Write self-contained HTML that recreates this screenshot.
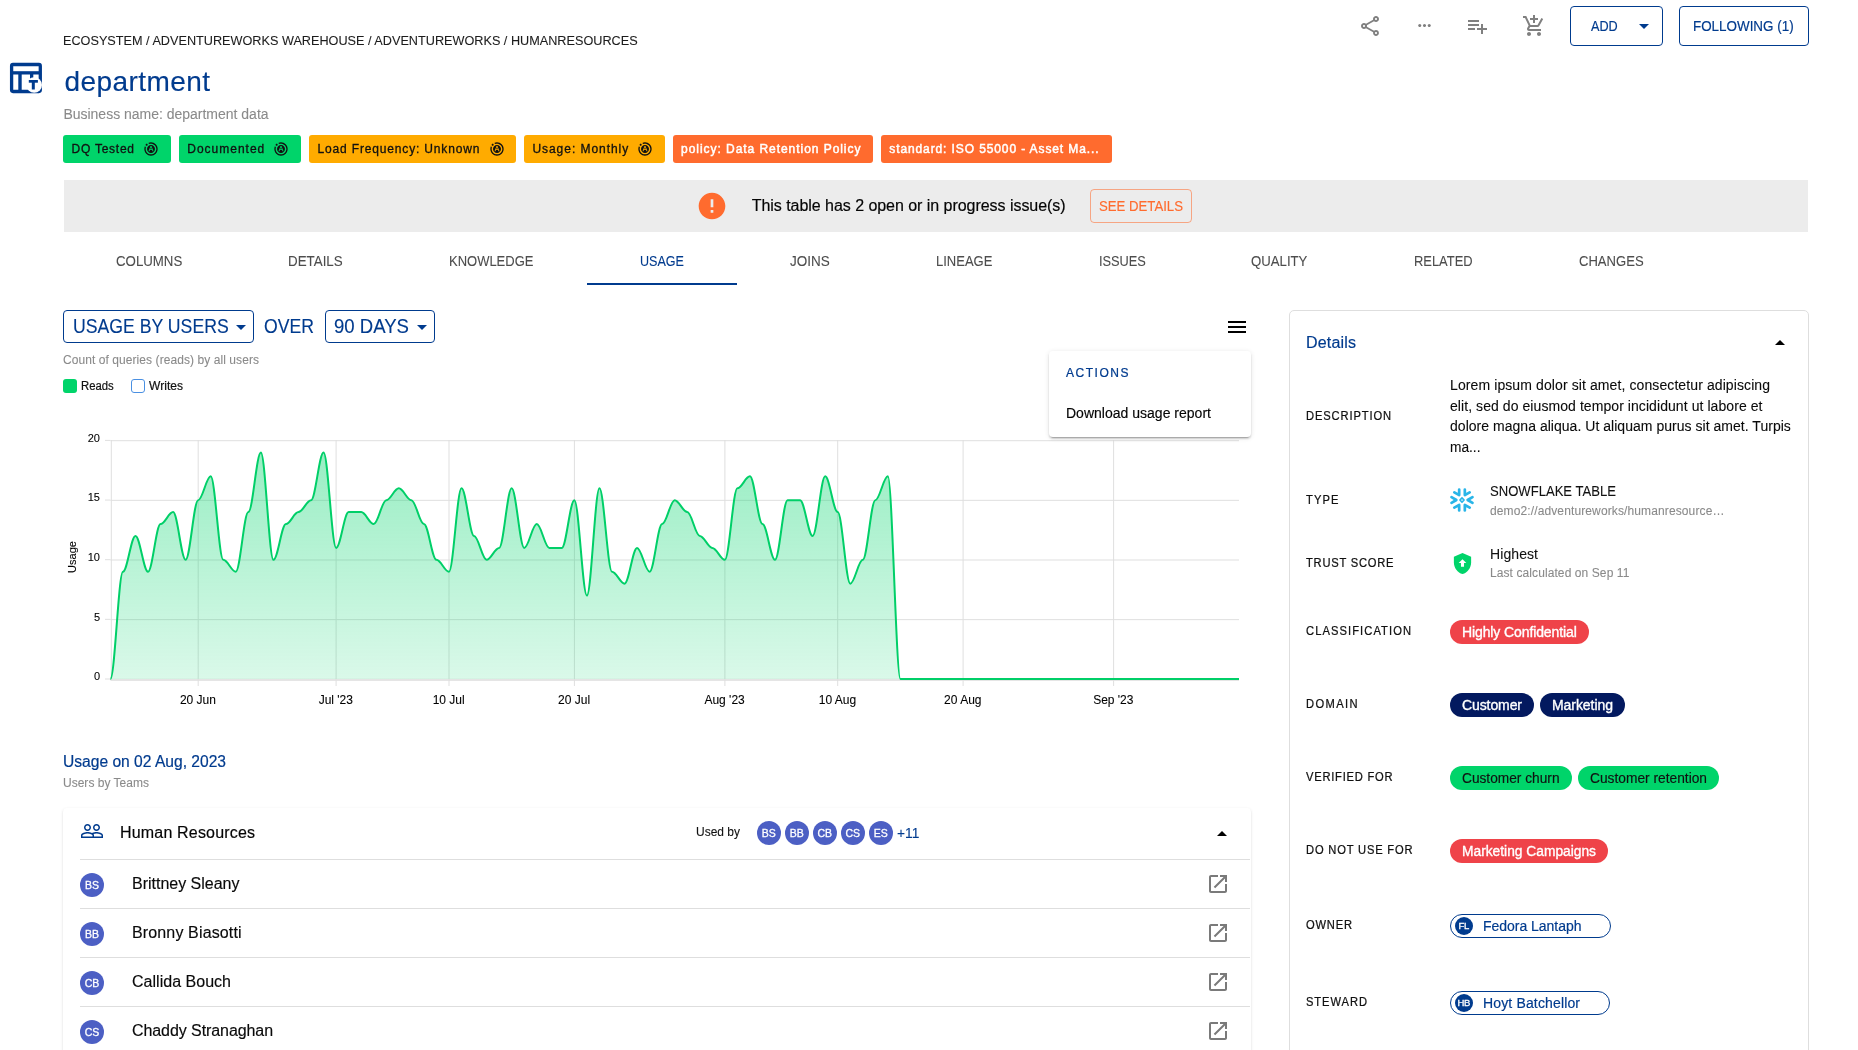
<!DOCTYPE html><html><head><meta charset="utf-8"><title>department - Usage</title><style>html,body{margin:0;padding:0;background:#fff}
body{width:1858px;height:1050px;overflow:hidden;position:relative;font-family:"Liberation Sans", sans-serif;}
.t{position:absolute;white-space:nowrap;font-family:"Liberation Sans", sans-serif;transform-origin:0 50%}
#app{position:absolute;left:0;top:0;width:1858px;height:1050px;will-change:transform}
.b{position:absolute}
.i{position:absolute;display:block;overflow:visible}
.av{border-radius:50%;color:#fff;text-align:center;font-family:"Liberation Sans", sans-serif;-webkit-text-stroke:.3px;letter-spacing:0}
</style></head><body><div id="app"><div class="t" style="left:63.4px;top:32.0px;font-size:13px;line-height:17px;color:#1c1c1c;-webkit-text-stroke:0.09px;transform:scaleX(0.9745);">ECOSYSTEM / ADVENTUREWORKS WAREHOUSE / ADVENTUREWORKS / HUMANRESOURCES</div><svg class="i" style="left:8px;top:61px" width="36" height="34" viewBox="8 61 36 34">
<rect x="11.6" y="64.5" width="28.7" height="27" rx="1.4" fill="none" stroke="#003b8e" stroke-width="3.3"/>
<rect x="11" y="71.2" width="30" height="3.3" fill="#003b8e"/>
<rect x="18.3" y="73" width="3.4" height="18" fill="#003b8e"/>
<rect x="30" y="73" width="3.3" height="6" fill="#003b8e"/>
<circle cx="34.2" cy="85" r="7.8" fill="#fff"/>
<rect x="28.8" y="80" width="9.1" height="2.7" fill="#003b8e"/>
<rect x="31.8" y="80" width="3" height="9.5" fill="#003b8e"/>
</svg><div class="t" style="left:64.5px;top:63.5px;font-size:28px;line-height:36px;color:#003b8e;-webkit-text-stroke:0.15px;letter-spacing:0.43px;">department</div><div class="t" style="left:63.4px;top:104.8px;font-size:14px;line-height:18px;color:#8a8a8a;-webkit-text-stroke:0.09px;letter-spacing:-0.01px;">Business name: department data</div><svg class="i" style="left:1358px;top:14px" width="24" height="24" viewBox="0 0 24 24"><path fill="#808080" fill-rule="evenodd" d="M18 16.08c-.76 0-1.44.3-1.96.77L8.91 12.7c.05-.23.09-.46.09-.7s-.04-.47-.09-.7l7.05-4.11c.54.5 1.25.81 2.04.81 1.66 0 3-1.34 3-3s-1.34-3-3-3-3 1.34-3 3c0 .24.04.47.09.7L8.04 9.81C7.5 9.31 6.79 9 6 9c-1.66 0-3 1.34-3 3s1.34 3 3 3c.79 0 1.5-.31 2.04-.81l7.12 4.16c-.05.21-.08.43-.08.65 0 1.61 1.31 2.92 2.92 2.92s2.92-1.31 2.92-2.92c0-1.61-1.31-2.92-2.92-2.92zM18 4c.55 0 1 .45 1 1s-.45 1-1 1-1-.45-1-1 .45-1 1-1zM6 13c-.55 0-1-.45-1-1s.45-1 1-1 1 .45 1 1-.45 1-1 1zm12 7.02c-.55 0-1-.45-1-1s.45-1 1-1 1 .45 1 1-.45 1-1 1z"/></svg><svg class="i" style="left:1414.5px;top:15.5px" width="19" height="19" viewBox="0 0 24 24"><path fill="#808080" fill-rule="evenodd" d="M6 10c-1.1 0-2 .9-2 2s.9 2 2 2 2-.9 2-2-.9-2-2-2zm12 0c-1.1 0-2 .9-2 2s.9 2 2 2 2-.9 2-2-.9-2-2-2zm-6 0c-1.1 0-2 .9-2 2s.9 2 2 2 2-.9 2-2-.9-2-2-2z"/></svg><svg class="i" style="left:1464.9px;top:14px" width="24" height="24" viewBox="0 0 24 24"><path fill="#808080" fill-rule="evenodd" d="M14 10H3v2h11v-2zm0-4H3v2h11V6zm4 8v-4h-2v4h-4v2h4v4h2v-4h4v-2h-4zM3 16h7v-2H3v2z"/></svg><svg class="i" style="left:1522px;top:14px" width="24" height="24" viewBox="0 0 24 24"><path fill="#808080" fill-rule="evenodd" d="M11 9h2V6h3V4h-3V1h-2v3H8v2h3v3zm-4 9c-1.1 0-1.99.9-1.99 2S5.9 22 7 22s2-.9 2-2-.9-2-2-2zm10 0c-1.1 0-1.99.9-1.99 2s.89 2 1.99 2 2-.9 2-2-.9-2-2-2zm-9.83-3.25l.03-.12.9-1.63h7.45c.75 0 1.41-.41 1.75-1.03l3.86-7.01L19.42 4h-.01l-1.1 2-2.76 5H8.53l-.13-.27L6.16 6l-.95-2-.94-2H1v2h2l3.6 7.59-1.35 2.45c-.16.28-.25.61-.25.96 0 1.1.9 2 2 2h12v-2H7.42c-.13 0-.25-.11-.25-.25z"/></svg><div class="b" style="left:1570px;top:6px;width:93px;height:40px;border:1px solid #003b8e;border-radius:4px;box-sizing:border-box"></div><div class="t" style="left:1590.7px;top:17.1px;font-size:14px;line-height:18px;color:#003b8e;-webkit-text-stroke:0.18px;transform:scaleX(0.9032);">ADD</div><svg class="i" style="left:1631.5px;top:13.5px" width="24" height="24" viewBox="0 0 24 24"><path fill="#003b8e" fill-rule="evenodd" d="M7 10l5 5 5-5z"/></svg><div class="b" style="left:1679px;top:6px;width:130px;height:40px;border:1px solid #003b8e;border-radius:4px;box-sizing:border-box"></div><div class="t" style="left:1693.4px;top:17.1px;font-size:14px;line-height:18px;color:#003b8e;-webkit-text-stroke:0.18px;transform:scaleX(0.9580);">FOLLOWING (1)</div><div class="b" style="left:63px;top:135px;width:108px;height:28px;background:#00d46a;border-radius:3px"></div><div class="t" style="left:71.6px;top:140.8px;font-size:12px;line-height:16px;color:#111;-webkit-text-stroke:0.30px;letter-spacing:0.74px;">DQ Tested</div><svg class="i" style="left:143.2px;top:141px" width="16" height="16" viewBox="0 0 24 24"><path fill="#111" fill-rule="evenodd" d="M2.88 7.88l1.54 1.54C4.15 10.23 4 11.1 4 12c0 4.41 3.59 8 8 8s8-3.59 8-8-3.59-8-8-8c-.9 0-1.77.15-2.58.42L7.89 2.89C9.15 2.32 10.54 2 12 2c5.52 0 10 4.48 10 10s-4.48 10-10 10S2 17.52 2 12c0-1.47.32-2.86.88-4.12zM7 5.5C7 6.33 6.33 7 5.5 7S4 6.33 4 5.5 4.67 4 5.5 4 7 4.67 7 5.500zM12.030 8.990h-.07L10.800 12.300h2.390l-1.160-3.310zM12 18c3.310 0 6-2.690 6-6s-2.690-6-6-6-6 2.690-6 6 2.690 6 6 6zm-.71-10.500h1.430l3.010 8h-1.390l-.72-2.040h-3.230l-.73 2.040H8.280l3.010-8z"/></svg><div class="b" style="left:179px;top:135px;width:122px;height:28px;background:#00d46a;border-radius:3px"></div><div class="t" style="left:187.3px;top:140.8px;font-size:12px;line-height:16px;color:#111;-webkit-text-stroke:0.30px;letter-spacing:0.99px;">Documented</div><svg class="i" style="left:273.3px;top:141px" width="16" height="16" viewBox="0 0 24 24"><path fill="#111" fill-rule="evenodd" d="M2.88 7.88l1.54 1.54C4.15 10.23 4 11.1 4 12c0 4.41 3.59 8 8 8s8-3.59 8-8-3.59-8-8-8c-.9 0-1.77.15-2.58.42L7.89 2.89C9.15 2.32 10.54 2 12 2c5.52 0 10 4.48 10 10s-4.48 10-10 10S2 17.52 2 12c0-1.47.32-2.86.88-4.12zM7 5.5C7 6.33 6.33 7 5.5 7S4 6.33 4 5.5 4.67 4 5.5 4 7 4.67 7 5.500zM12.030 8.990h-.07L10.800 12.300h2.390l-1.160-3.310zM12 18c3.310 0 6-2.690 6-6s-2.690-6-6-6-6 2.690-6 6 2.690 6 6 6zm-.71-10.500h1.430l3.010 8h-1.390l-.72-2.040h-3.230l-.73 2.040H8.280l3.010-8z"/></svg><div class="b" style="left:309px;top:135px;width:207px;height:28px;background:#ffab00;border-radius:3px"></div><div class="t" style="left:317.5px;top:140.8px;font-size:12px;line-height:16px;color:#111;-webkit-text-stroke:0.30px;letter-spacing:0.84px;">Load Frequency: Unknown</div><svg class="i" style="left:488.8px;top:141px" width="16" height="16" viewBox="0 0 24 24"><path fill="#111" fill-rule="evenodd" d="M2.88 7.88l1.54 1.54C4.15 10.23 4 11.1 4 12c0 4.41 3.59 8 8 8s8-3.59 8-8-3.59-8-8-8c-.9 0-1.77.15-2.58.42L7.89 2.89C9.15 2.32 10.54 2 12 2c5.52 0 10 4.48 10 10s-4.48 10-10 10S2 17.52 2 12c0-1.47.32-2.86.88-4.12zM7 5.5C7 6.33 6.33 7 5.5 7S4 6.33 4 5.5 4.67 4 5.5 4 7 4.67 7 5.500zM12.030 8.990h-.07L10.800 12.300h2.390l-1.160-3.310zM12 18c3.310 0 6-2.690 6-6s-2.690-6-6-6-6 2.690-6 6 2.690 6 6 6zm-.71-10.500h1.430l3.010 8h-1.390l-.72-2.040h-3.230l-.73 2.040H8.280l3.010-8z"/></svg><div class="b" style="left:524px;top:135px;width:141px;height:28px;background:#ffab00;border-radius:3px"></div><div class="t" style="left:532.4px;top:140.8px;font-size:12px;line-height:16px;color:#111;-webkit-text-stroke:0.30px;letter-spacing:0.96px;">Usage: Monthly</div><svg class="i" style="left:637.3px;top:141px" width="16" height="16" viewBox="0 0 24 24"><path fill="#111" fill-rule="evenodd" d="M2.88 7.88l1.54 1.54C4.15 10.23 4 11.1 4 12c0 4.41 3.59 8 8 8s8-3.59 8-8-3.59-8-8-8c-.9 0-1.77.15-2.58.42L7.89 2.89C9.15 2.32 10.54 2 12 2c5.52 0 10 4.48 10 10s-4.48 10-10 10S2 17.52 2 12c0-1.47.32-2.86.88-4.12zM7 5.5C7 6.33 6.33 7 5.5 7S4 6.33 4 5.5 4.67 4 5.5 4 7 4.67 7 5.500zM12.030 8.990h-.07L10.800 12.300h2.390l-1.160-3.310zM12 18c3.310 0 6-2.690 6-6s-2.690-6-6-6-6 2.690-6 6 2.690 6 6 6zm-.71-10.500h1.430l3.010 8h-1.390l-.72-2.040h-3.230l-.73 2.040H8.280l3.010-8z"/></svg><div class="b" style="left:673px;top:135px;width:200px;height:28px;background:#ff6b2e;border-radius:3px"></div><div class="t" style="left:681.1px;top:140.8px;font-size:12px;line-height:16px;color:#fff;-webkit-text-stroke:0.48px;letter-spacing:0.95px;">policy: Data Retention Policy</div><div class="b" style="left:881px;top:135px;width:231px;height:28px;background:#ff6b2e;border-radius:3px"></div><div class="t" style="left:889.3px;top:140.8px;font-size:12px;line-height:16px;color:#fff;-webkit-text-stroke:0.48px;letter-spacing:0.89px;">standard: ISO 55000 - Asset Ma...</div><div class="b" style="left:64px;top:180px;width:1744px;height:52px;background:#ececec"></div><svg class="i" style="left:696px;top:190px" width="32" height="32" viewBox="0 0 24 24"><path fill="#ff6b2e" fill-rule="evenodd" d="M12 2C6.48 2 2 6.48 2 12s4.48 10 10 10 10-4.48 10-10S17.52 2 12 2zm1 15h-2v-2h2v2zm0-4h-2V7h2v6z"/></svg><div class="t" style="left:751.7px;top:195.0px;font-size:16px;line-height:21px;color:#050505;-webkit-text-stroke:0.18px;letter-spacing:-0.04px;">This table has 2 open or in progress issue(s)</div><div class="b" style="left:1090px;top:189px;width:102px;height:34px;border:1px solid rgba(255,107,46,.55);border-radius:4px;box-sizing:border-box"></div><div class="t" style="left:1098.7px;top:197.1px;font-size:14px;line-height:18px;color:#ff6b2e;-webkit-text-stroke:0.15px;transform:scaleX(0.9415);">SEE DETAILS</div><div class="t" style="left:116.0px;top:252.0px;font-size:14px;line-height:18px;color:#4d4d4d;-webkit-text-stroke:0.09px;transform:scaleX(0.9469);">COLUMNS</div><div class="t" style="left:288.2px;top:252.0px;font-size:14px;line-height:18px;color:#4d4d4d;-webkit-text-stroke:0.09px;transform:scaleX(0.9544);">DETAILS</div><div class="t" style="left:449.2px;top:252.0px;font-size:14px;line-height:18px;color:#4d4d4d;-webkit-text-stroke:0.09px;transform:scaleX(0.9273);">KNOWLEDGE</div><div class="t" style="left:639.5px;top:252.0px;font-size:14px;line-height:18px;color:#003b8e;-webkit-text-stroke:0.09px;transform:scaleX(0.8977);">USAGE</div><div class="t" style="left:790.2px;top:252.0px;font-size:14px;line-height:18px;color:#4d4d4d;-webkit-text-stroke:0.09px;transform:scaleX(0.9628);">JOINS</div><div class="t" style="left:936.2px;top:252.0px;font-size:14px;line-height:18px;color:#4d4d4d;-webkit-text-stroke:0.09px;transform:scaleX(0.9291);">LINEAGE</div><div class="t" style="left:1098.5px;top:252.0px;font-size:14px;line-height:18px;color:#4d4d4d;-webkit-text-stroke:0.09px;transform:scaleX(0.9132);">ISSUES</div><div class="t" style="left:1251.3px;top:252.0px;font-size:14px;line-height:18px;color:#4d4d4d;-webkit-text-stroke:0.09px;transform:scaleX(0.9415);">QUALITY</div><div class="t" style="left:1414.1px;top:252.0px;font-size:14px;line-height:18px;color:#4d4d4d;-webkit-text-stroke:0.09px;transform:scaleX(0.9222);">RELATED</div><div class="t" style="left:1579.0px;top:252.0px;font-size:14px;line-height:18px;color:#4d4d4d;-webkit-text-stroke:0.09px;transform:scaleX(0.9331);">CHANGES</div><div class="b" style="left:587px;top:282.5px;width:150px;height:2.0px;background:#003b8e"></div><div class="b" style="left:63px;top:310px;width:191px;height:33px;border:1px solid #003b8e;border-radius:4px;box-sizing:border-box"></div><div class="t" style="left:72.5px;top:312.6px;font-size:20px;line-height:26px;color:#003b8e;-webkit-text-stroke:0.12px;transform:scaleX(0.8829);">USAGE BY USERS</div><svg class="i" style="left:228.5px;top:315px" width="24" height="24" viewBox="0 0 24 24"><path fill="#003b8e" fill-rule="evenodd" d="M7 10l5 5 5-5z"/></svg><div class="t" style="left:264.0px;top:312.6px;font-size:20px;line-height:26px;color:#003b8e;-webkit-text-stroke:0.12px;transform:scaleX(0.8820);">OVER</div><div class="b" style="left:325px;top:310px;width:110px;height:33px;border:1px solid #003b8e;border-radius:4px;box-sizing:border-box"></div><div class="t" style="left:334.0px;top:312.6px;font-size:20px;line-height:26px;color:#003b8e;-webkit-text-stroke:0.12px;transform:scaleX(0.9284);">90 DAYS</div><svg class="i" style="left:409.7px;top:315px" width="24" height="24" viewBox="0 0 24 24"><path fill="#003b8e" fill-rule="evenodd" d="M7 10l5 5 5-5z"/></svg><div class="t" style="left:63.0px;top:351.8px;font-size:12px;line-height:16px;color:#8a8a8a;-webkit-text-stroke:0.09px;letter-spacing:0.07px;">Count of queries (reads) by all users</div><div class="b" style="left:63px;top:379px;width:14px;height:14px;background:#00d46a;border-radius:3px"></div><div class="t" style="left:81.3px;top:378.0px;font-size:12px;line-height:16px;color:#111;-webkit-text-stroke:0.21px;transform:scaleX(0.9427);">Reads</div><div class="b" style="left:131px;top:379px;width:14px;height:14px;background:#fff;border:1px solid #4a90e2;border-radius:3px;box-sizing:border-box"></div><div class="t" style="left:149.0px;top:378.0px;font-size:12px;line-height:16px;color:#111;-webkit-text-stroke:0.21px;letter-spacing:0.04px;">Writes</div><svg class="i" style="left:1225px;top:315px" width="24" height="24" viewBox="0 0 24 24"><path fill="#000" fill-rule="evenodd" d="M3 18h18v-2H3v2zm0-5h18v-2H3v2zm0-7v2h18V6H3z"/></svg><svg class="i" style="left:0;top:420px" width="1260" height="300" viewBox="0 420 1260 300"><defs><linearGradient id="g" x1="0" y1="452" x2="0" y2="679" gradientUnits="userSpaceOnUse"><stop offset="0" stop-color="#00d46a" stop-opacity=".40"/><stop offset="1" stop-color="#00d46a" stop-opacity=".145"/></linearGradient></defs><line x1="110.5" x2="1239" y1="440.70" y2="440.70" stroke="#dfdfdf" stroke-width="1"/><line x1="105" x2="110.5" y1="440.40" y2="440.40" stroke="#dfdfdf" stroke-width="1"/><line x1="110.5" x2="1239" y1="500.35" y2="500.35" stroke="#dfdfdf" stroke-width="1"/><line x1="105" x2="110.5" y1="500.05" y2="500.05" stroke="#dfdfdf" stroke-width="1"/><line x1="110.5" x2="1239" y1="560.00" y2="560.00" stroke="#dfdfdf" stroke-width="1"/><line x1="105" x2="110.5" y1="559.70" y2="559.70" stroke="#dfdfdf" stroke-width="1"/><line x1="110.5" x2="1239" y1="619.65" y2="619.65" stroke="#dfdfdf" stroke-width="1"/><line x1="105" x2="110.5" y1="619.35" y2="619.35" stroke="#dfdfdf" stroke-width="1"/><line x1="110.5" x2="1239" y1="679.30" y2="679.30" stroke="#dfdfdf" stroke-width="1"/><line x1="105" x2="110.5" y1="679.00" y2="679.00" stroke="#dfdfdf" stroke-width="1"/><line x1="198.2" x2="198.2" y1="440" y2="686" stroke="#dfdfdf" stroke-width="1"/><line x1="336.1" x2="336.1" y1="440" y2="686" stroke="#dfdfdf" stroke-width="1"/><line x1="449.0" x2="449.0" y1="440" y2="686" stroke="#dfdfdf" stroke-width="1"/><line x1="574.4" x2="574.4" y1="440" y2="686" stroke="#dfdfdf" stroke-width="1"/><line x1="724.9" x2="724.9" y1="440" y2="686" stroke="#dfdfdf" stroke-width="1"/><line x1="837.7" x2="837.7" y1="440" y2="686" stroke="#dfdfdf" stroke-width="1"/><line x1="963.1" x2="963.1" y1="440" y2="686" stroke="#dfdfdf" stroke-width="1"/><line x1="1113.6" x2="1113.6" y1="440" y2="686" stroke="#dfdfdf" stroke-width="1"/><line x1="111.3" x2="111.3" y1="440" y2="680" stroke="#dfdfdf" stroke-width="1"/><line x1="110.5" x2="1239" y1="680.3" y2="680.3" stroke="#dfdfdf" stroke-width="1"/><path d="M 110.40 679.00 C 114.79 679.00 118.55 571.72 122.94 571.72 C 127.33 571.72 131.09 535.96 135.48 535.96 C 139.87 535.96 143.63 571.72 148.02 571.72 C 152.41 571.72 156.17 524.04 160.56 524.04 C 164.95 524.04 168.71 512.12 173.10 512.12 C 177.49 512.12 181.25 559.80 185.64 559.80 C 190.03 559.80 193.79 500.20 198.18 500.20 C 202.57 500.20 206.33 476.36 210.72 476.36 C 215.11 476.36 218.87 559.80 223.26 559.80 C 227.65 559.80 231.41 571.72 235.80 571.72 C 240.19 571.72 243.95 512.12 248.34 512.12 C 252.73 512.12 256.49 452.52 260.88 452.52 C 265.27 452.52 269.03 559.80 273.42 559.80 C 277.81 559.80 281.57 524.04 285.96 524.04 C 290.35 524.04 294.11 512.12 298.50 512.12 C 302.89 512.12 306.65 500.20 311.04 500.20 C 315.43 500.20 319.19 452.52 323.58 452.52 C 327.97 452.52 331.73 547.88 336.12 547.88 C 340.51 547.88 344.27 512.12 348.66 512.12 C 353.05 512.12 356.81 512.12 361.20 512.12 C 365.59 512.12 369.35 524.04 373.74 524.04 C 378.13 524.04 381.89 500.20 386.28 500.20 C 390.67 500.20 394.43 488.28 398.82 488.28 C 403.21 488.28 406.97 500.20 411.36 500.20 C 415.75 500.20 419.51 524.04 423.90 524.04 C 428.29 524.04 432.05 559.80 436.44 559.80 C 440.83 559.80 444.59 571.72 448.98 571.72 C 453.37 571.72 457.13 488.28 461.52 488.28 C 465.91 488.28 469.67 535.96 474.06 535.96 C 478.45 535.96 482.21 559.80 486.60 559.80 C 490.99 559.80 494.75 547.88 499.14 547.88 C 503.53 547.88 507.29 488.28 511.68 488.28 C 516.07 488.28 519.83 547.88 524.22 547.88 C 528.61 547.88 532.37 524.04 536.76 524.04 C 541.15 524.04 544.91 547.88 549.30 547.88 C 553.69 547.88 557.45 547.88 561.84 547.88 C 566.23 547.88 569.99 500.20 574.38 500.20 C 578.77 500.20 582.53 595.56 586.92 595.56 C 591.31 595.56 595.07 488.28 599.46 488.28 C 603.85 488.28 607.61 571.72 612.00 571.72 C 616.39 571.72 620.15 583.64 624.54 583.64 C 628.93 583.64 632.69 547.88 637.08 547.88 C 641.47 547.88 645.23 571.72 649.62 571.72 C 654.01 571.72 657.77 524.04 662.16 524.04 C 666.55 524.04 670.31 500.20 674.70 500.20 C 679.09 500.20 682.85 512.12 687.24 512.12 C 691.63 512.12 695.39 535.96 699.78 535.96 C 704.17 535.96 707.93 547.88 712.32 547.88 C 716.71 547.88 720.47 559.80 724.86 559.80 C 729.25 559.80 733.01 488.28 737.40 488.28 C 741.79 488.28 745.55 476.36 749.94 476.36 C 754.33 476.36 758.09 524.04 762.48 524.04 C 766.87 524.04 770.63 559.80 775.02 559.80 C 779.41 559.80 783.17 500.20 787.56 500.20 C 791.95 500.20 795.71 500.20 800.10 500.20 C 804.49 500.20 808.25 535.96 812.64 535.96 C 817.03 535.96 820.79 476.36 825.18 476.36 C 829.57 476.36 833.33 512.12 837.72 512.12 C 842.11 512.12 845.87 583.64 850.26 583.64 C 854.65 583.64 858.41 559.80 862.80 559.80 C 867.19 559.80 870.95 500.20 875.34 500.20 C 879.73 500.20 883.49 476.36 887.88 476.36 C 892.27 476.36 896.03 679.00 900.42 679.00 C 904.81 679.00 908.57 679.00 912.96 679.00 C 917.35 679.00 921.11 679.00 925.50 679.00 C 929.89 679.00 933.65 679.00 938.04 679.00 C 942.43 679.00 946.19 679.00 950.58 679.00 C 954.97 679.00 958.73 679.00 963.12 679.00 C 967.51 679.00 971.27 679.00 975.66 679.00 C 980.05 679.00 983.81 679.00 988.20 679.00 C 992.59 679.00 996.35 679.00 1000.74 679.00 C 1005.13 679.00 1008.89 679.00 1013.28 679.00 C 1017.67 679.00 1021.43 679.00 1025.82 679.00 C 1030.21 679.00 1033.97 679.00 1038.36 679.00 C 1042.75 679.00 1046.51 679.00 1050.90 679.00 C 1055.29 679.00 1059.05 679.00 1063.44 679.00 C 1067.83 679.00 1071.59 679.00 1075.98 679.00 C 1080.37 679.00 1084.13 679.00 1088.52 679.00 C 1092.91 679.00 1096.67 679.00 1101.06 679.00 C 1105.45 679.00 1109.21 679.00 1113.60 679.00 C 1117.99 679.00 1121.75 679.00 1126.14 679.00 C 1130.53 679.00 1134.29 679.00 1138.68 679.00 C 1143.07 679.00 1146.83 679.00 1151.22 679.00 C 1155.61 679.00 1159.37 679.00 1163.76 679.00 C 1168.15 679.00 1171.91 679.00 1176.30 679.00 C 1180.69 679.00 1184.45 679.00 1188.84 679.00 C 1193.23 679.00 1196.99 679.00 1201.38 679.00 C 1205.77 679.00 1209.53 679.00 1213.92 679.00 C 1218.31 679.00 1222.07 679.00 1226.46 679.00 C 1230.85 679.00 1234.61 679.00 1239.00 679.00 L 1239.00 679.00 L 110.40 679.00 Z" fill="url(#g)"/><path d="M 110.40 679.00 C 114.79 679.00 118.55 571.72 122.94 571.72 C 127.33 571.72 131.09 535.96 135.48 535.96 C 139.87 535.96 143.63 571.72 148.02 571.72 C 152.41 571.72 156.17 524.04 160.56 524.04 C 164.95 524.04 168.71 512.12 173.10 512.12 C 177.49 512.12 181.25 559.80 185.64 559.80 C 190.03 559.80 193.79 500.20 198.18 500.20 C 202.57 500.20 206.33 476.36 210.72 476.36 C 215.11 476.36 218.87 559.80 223.26 559.80 C 227.65 559.80 231.41 571.72 235.80 571.72 C 240.19 571.72 243.95 512.12 248.34 512.12 C 252.73 512.12 256.49 452.52 260.88 452.52 C 265.27 452.52 269.03 559.80 273.42 559.80 C 277.81 559.80 281.57 524.04 285.96 524.04 C 290.35 524.04 294.11 512.12 298.50 512.12 C 302.89 512.12 306.65 500.20 311.04 500.20 C 315.43 500.20 319.19 452.52 323.58 452.52 C 327.97 452.52 331.73 547.88 336.12 547.88 C 340.51 547.88 344.27 512.12 348.66 512.12 C 353.05 512.12 356.81 512.12 361.20 512.12 C 365.59 512.12 369.35 524.04 373.74 524.04 C 378.13 524.04 381.89 500.20 386.28 500.20 C 390.67 500.20 394.43 488.28 398.82 488.28 C 403.21 488.28 406.97 500.20 411.36 500.20 C 415.75 500.20 419.51 524.04 423.90 524.04 C 428.29 524.04 432.05 559.80 436.44 559.80 C 440.83 559.80 444.59 571.72 448.98 571.72 C 453.37 571.72 457.13 488.28 461.52 488.28 C 465.91 488.28 469.67 535.96 474.06 535.96 C 478.45 535.96 482.21 559.80 486.60 559.80 C 490.99 559.80 494.75 547.88 499.14 547.88 C 503.53 547.88 507.29 488.28 511.68 488.28 C 516.07 488.28 519.83 547.88 524.22 547.88 C 528.61 547.88 532.37 524.04 536.76 524.04 C 541.15 524.04 544.91 547.88 549.30 547.88 C 553.69 547.88 557.45 547.88 561.84 547.88 C 566.23 547.88 569.99 500.20 574.38 500.20 C 578.77 500.20 582.53 595.56 586.92 595.56 C 591.31 595.56 595.07 488.28 599.46 488.28 C 603.85 488.28 607.61 571.72 612.00 571.72 C 616.39 571.72 620.15 583.64 624.54 583.64 C 628.93 583.64 632.69 547.88 637.08 547.88 C 641.47 547.88 645.23 571.72 649.62 571.72 C 654.01 571.72 657.77 524.04 662.16 524.04 C 666.55 524.04 670.31 500.20 674.70 500.20 C 679.09 500.20 682.85 512.12 687.24 512.12 C 691.63 512.12 695.39 535.96 699.78 535.96 C 704.17 535.96 707.93 547.88 712.32 547.88 C 716.71 547.88 720.47 559.80 724.86 559.80 C 729.25 559.80 733.01 488.28 737.40 488.28 C 741.79 488.28 745.55 476.36 749.94 476.36 C 754.33 476.36 758.09 524.04 762.48 524.04 C 766.87 524.04 770.63 559.80 775.02 559.80 C 779.41 559.80 783.17 500.20 787.56 500.20 C 791.95 500.20 795.71 500.20 800.10 500.20 C 804.49 500.20 808.25 535.96 812.64 535.96 C 817.03 535.96 820.79 476.36 825.18 476.36 C 829.57 476.36 833.33 512.12 837.72 512.12 C 842.11 512.12 845.87 583.64 850.26 583.64 C 854.65 583.64 858.41 559.80 862.80 559.80 C 867.19 559.80 870.95 500.20 875.34 500.20 C 879.73 500.20 883.49 476.36 887.88 476.36 C 892.27 476.36 896.03 679.00 900.42 679.00 C 904.81 679.00 908.57 679.00 912.96 679.00 C 917.35 679.00 921.11 679.00 925.50 679.00 C 929.89 679.00 933.65 679.00 938.04 679.00 C 942.43 679.00 946.19 679.00 950.58 679.00 C 954.97 679.00 958.73 679.00 963.12 679.00 C 967.51 679.00 971.27 679.00 975.66 679.00 C 980.05 679.00 983.81 679.00 988.20 679.00 C 992.59 679.00 996.35 679.00 1000.74 679.00 C 1005.13 679.00 1008.89 679.00 1013.28 679.00 C 1017.67 679.00 1021.43 679.00 1025.82 679.00 C 1030.21 679.00 1033.97 679.00 1038.36 679.00 C 1042.75 679.00 1046.51 679.00 1050.90 679.00 C 1055.29 679.00 1059.05 679.00 1063.44 679.00 C 1067.83 679.00 1071.59 679.00 1075.98 679.00 C 1080.37 679.00 1084.13 679.00 1088.52 679.00 C 1092.91 679.00 1096.67 679.00 1101.06 679.00 C 1105.45 679.00 1109.21 679.00 1113.60 679.00 C 1117.99 679.00 1121.75 679.00 1126.14 679.00 C 1130.53 679.00 1134.29 679.00 1138.68 679.00 C 1143.07 679.00 1146.83 679.00 1151.22 679.00 C 1155.61 679.00 1159.37 679.00 1163.76 679.00 C 1168.15 679.00 1171.91 679.00 1176.30 679.00 C 1180.69 679.00 1184.45 679.00 1188.84 679.00 C 1193.23 679.00 1196.99 679.00 1201.38 679.00 C 1205.77 679.00 1209.53 679.00 1213.92 679.00 C 1218.31 679.00 1222.07 679.00 1226.46 679.00 C 1230.85 679.00 1234.61 679.00 1239.00 679.00" fill="none" stroke="#00cf68" stroke-width="2" stroke-linecap="butt"/></svg><div class="t" style="left:40.0px;top:430.9px;font-size:11px;line-height:14px;color:#000;-webkit-text-stroke:0.09px;width:60px;text-align:right;">20</div><div class="t" style="left:40.0px;top:490.4px;font-size:11px;line-height:14px;color:#000;-webkit-text-stroke:0.09px;width:60px;text-align:right;">15</div><div class="t" style="left:40.0px;top:550.0px;font-size:11px;line-height:14px;color:#000;-webkit-text-stroke:0.09px;width:60px;text-align:right;">10</div><div class="t" style="left:40.0px;top:609.5px;font-size:11px;line-height:14px;color:#000;-webkit-text-stroke:0.09px;width:60px;text-align:right;">5</div><div class="t" style="left:40.0px;top:669.1px;font-size:11px;line-height:14px;color:#000;-webkit-text-stroke:0.09px;width:60px;text-align:right;">0</div><div class="t" style="left:42.3px;top:549.6px;width:60px;text-align:center;font-size:11px;line-height:14px;color:#000;-webkit-text-stroke:.09px;transform-origin:50% 50%;transform:rotate(-90deg)">Usage</div><div class="t" style="left:157.9px;top:691.8px;font-size:12px;line-height:16px;color:#000;-webkit-text-stroke:0.09px;width:80px;text-align:center;">20 Jun</div><div class="t" style="left:295.8px;top:691.8px;font-size:12px;line-height:16px;color:#000;-webkit-text-stroke:0.09px;width:80px;text-align:center;">Jul '23</div><div class="t" style="left:408.7px;top:691.8px;font-size:12px;line-height:16px;color:#000;-webkit-text-stroke:0.09px;width:80px;text-align:center;">10 Jul</div><div class="t" style="left:534.1px;top:691.8px;font-size:12px;line-height:16px;color:#000;-webkit-text-stroke:0.09px;width:80px;text-align:center;">20 Jul</div><div class="t" style="left:684.6px;top:691.8px;font-size:12px;line-height:16px;color:#000;-webkit-text-stroke:0.09px;width:80px;text-align:center;">Aug '23</div><div class="t" style="left:797.4px;top:691.8px;font-size:12px;line-height:16px;color:#000;-webkit-text-stroke:0.09px;width:80px;text-align:center;">10 Aug</div><div class="t" style="left:922.8px;top:691.8px;font-size:12px;line-height:16px;color:#000;-webkit-text-stroke:0.09px;width:80px;text-align:center;">20 Aug</div><div class="t" style="left:1073.3px;top:691.8px;font-size:12px;line-height:16px;color:#000;-webkit-text-stroke:0.09px;width:80px;text-align:center;">Sep '23</div><div class="b" style="left:1049px;top:351px;width:202px;height:86px;background:#fff;border-radius:4px;box-shadow:0 3px 1px -2px rgba(0,0,0,.2),0 2px 2px 0 rgba(0,0,0,.14),0 1px 5px 0 rgba(0,0,0,.12)"></div><div class="t" style="left:1066.0px;top:364.9px;font-size:12px;line-height:16px;color:#003b8e;-webkit-text-stroke:0.24px;letter-spacing:1.54px;">ACTIONS</div><div class="t" style="left:1066.0px;top:404.1px;font-size:14px;line-height:18px;color:#050505;-webkit-text-stroke:0.15px;letter-spacing:0.01px;">Download usage report</div><div class="t" style="left:63.0px;top:751.3px;font-size:16px;line-height:21px;color:#003b8e;-webkit-text-stroke:0.21px;transform:scaleX(0.9746);">Usage on 02 Aug, 2023</div><div class="t" style="left:63.0px;top:774.5px;font-size:12px;line-height:16px;color:#8a8a8a;-webkit-text-stroke:0.09px;letter-spacing:0.01px;">Users by Teams</div><div class="b" style="left:63px;top:808px;width:1188px;height:252px;background:#fff;border-radius:4px;box-shadow:0 2px 1px -1px rgba(0,0,0,.2),0 1px 1px 0 rgba(0,0,0,.14),0 1px 3px 0 rgba(0,0,0,.12)"></div><svg class="i" style="left:80px;top:819px" width="24" height="24" viewBox="0 0 24 24"><path fill="#003b8e" fill-rule="evenodd" d="M16.5 13c-1.2 0-3.07.34-4.5 1-1.43-.67-3.3-1-4.5-1C5.33 13 1 14.08 1 16.25V19h22v-2.75c0-2.17-4.33-3.25-6.5-3.25zm-4 4.5h-10v-1.25c0-.54 2.56-1.75 5-1.75s5 1.21 5 1.75v1.25zm9 0H14v-1.25c0-.46-.2-.86-.52-1.22.88-.3 1.96-.53 3.02-.53 2.44 0 5 1.21 5 1.75v1.25zM7.5 12c1.93 0 3.5-1.57 3.5-3.5S9.43 5 7.5 5 4 6.57 4 8.5 5.57 12 7.5 12zm0-5.5c1.1 0 2 .9 2 2s-.9 2-2 2-2-.9-2-2 .9-2 2-2zm9 5.5c1.93 0 3.5-1.57 3.5-3.5S18.43 5 16.5 5 13 6.57 13 8.5s1.57 3.5 3.5 3.5zm0-5.5c1.1 0 2 .9 2 2s-.9 2-2 2-2-.9-2-2 .9-2 2-2z"/></svg><div class="t" style="left:120.0px;top:821.8px;font-size:16px;line-height:21px;color:#050505;-webkit-text-stroke:0.18px;letter-spacing:0.18px;">Human Resources</div><div class="t" style="left:696.0px;top:824.0px;font-size:12px;line-height:16px;color:#111;-webkit-text-stroke:0.09px;letter-spacing:-0.01px;">Used by</div><div class="b av" style="left:756.8px;top:820.9px;width:24px;height:24px;line-height:24px;font-size:10.5px;letter-spacing:0px;text-indent:0px;background:#4c5fc4">BS</div><div class="b av" style="left:784.8px;top:820.9px;width:24px;height:24px;line-height:24px;font-size:10.5px;letter-spacing:0px;text-indent:0px;background:#4c5fc4">BB</div><div class="b av" style="left:812.8px;top:820.9px;width:24px;height:24px;line-height:24px;font-size:10.5px;letter-spacing:0px;text-indent:0px;background:#4c5fc4">CB</div><div class="b av" style="left:840.8px;top:820.9px;width:24px;height:24px;line-height:24px;font-size:10.5px;letter-spacing:0px;text-indent:0px;background:#4c5fc4">CS</div><div class="b av" style="left:868.8px;top:820.9px;width:24px;height:24px;line-height:24px;font-size:10.5px;letter-spacing:0px;text-indent:0px;background:#4c5fc4">ES</div><div class="t" style="left:896.5px;top:823.9px;font-size:14px;line-height:18px;color:#003b8e;-webkit-text-stroke:0.09px;transform:scaleX(0.9816);">+11</div><svg class="i" style="left:1210px;top:822px" width="24" height="24" viewBox="0 0 24 24"><path fill="#000" fill-rule="evenodd" d="M7 14l5-5 5 5z"/></svg><div class="b" style="left:80px;top:859.0px;width:1170px;height:1.0px;background:#dedede"></div><div class="b av" style="left:80px;top:872.9px;width:24px;height:24px;line-height:24px;font-size:10.5px;letter-spacing:0px;text-indent:0px;background:#4c5fc4">BS</div><div class="t" style="left:132.0px;top:873.0px;font-size:16px;line-height:21px;color:#0a0a0a;-webkit-text-stroke:0.15px;letter-spacing:-0.01px;">Brittney Sleany</div><svg class="i" style="left:1206px;top:871.8px" width="24" height="24" viewBox="0 0 24 24"><path fill="#7a7a7a" fill-rule="evenodd" d="M19 19H5V5h7V3H5c-1.11 0-2 .9-2 2v14c0 1.1.89 2 2 2h14c1.1 0 2-.9 2-2v-7h-2v7zM14 3v2h3.59l-9.83 9.83 1.41 1.41L19 6.41V10h2V3h-7z"/></svg><div class="b" style="left:80px;top:908.0px;width:1170px;height:1.0px;background:#dedede"></div><div class="b av" style="left:80px;top:921.9px;width:24px;height:24px;line-height:24px;font-size:10.5px;letter-spacing:0px;text-indent:0px;background:#4c5fc4">BB</div><div class="t" style="left:132.0px;top:922.0px;font-size:16px;line-height:21px;color:#0a0a0a;-webkit-text-stroke:0.15px;letter-spacing:0.14px;">Bronny Biasotti</div><svg class="i" style="left:1206px;top:920.8px" width="24" height="24" viewBox="0 0 24 24"><path fill="#7a7a7a" fill-rule="evenodd" d="M19 19H5V5h7V3H5c-1.11 0-2 .9-2 2v14c0 1.1.89 2 2 2h14c1.1 0 2-.9 2-2v-7h-2v7zM14 3v2h3.59l-9.83 9.83 1.41 1.41L19 6.41V10h2V3h-7z"/></svg><div class="b" style="left:80px;top:957.0px;width:1170px;height:1.0px;background:#dedede"></div><div class="b av" style="left:80px;top:970.9px;width:24px;height:24px;line-height:24px;font-size:10.5px;letter-spacing:0px;text-indent:0px;background:#4c5fc4">CB</div><div class="t" style="left:132.0px;top:971.0px;font-size:16px;line-height:21px;color:#0a0a0a;-webkit-text-stroke:0.15px;letter-spacing:0.02px;">Callida Bouch</div><svg class="i" style="left:1206px;top:969.8px" width="24" height="24" viewBox="0 0 24 24"><path fill="#7a7a7a" fill-rule="evenodd" d="M19 19H5V5h7V3H5c-1.11 0-2 .9-2 2v14c0 1.1.89 2 2 2h14c1.1 0 2-.9 2-2v-7h-2v7zM14 3v2h3.59l-9.83 9.83 1.41 1.41L19 6.41V10h2V3h-7z"/></svg><div class="b" style="left:80px;top:1006.0px;width:1170px;height:1.0px;background:#dedede"></div><div class="b av" style="left:80px;top:1019.8999999999999px;width:24px;height:24px;line-height:24px;font-size:10.5px;letter-spacing:0px;text-indent:0px;background:#4c5fc4">CS</div><div class="t" style="left:132.0px;top:1020.0px;font-size:16px;line-height:21px;color:#0a0a0a;-webkit-text-stroke:0.15px;letter-spacing:-0.08px;">Chaddy Stranaghan</div><svg class="i" style="left:1206px;top:1018.8px" width="24" height="24" viewBox="0 0 24 24"><path fill="#7a7a7a" fill-rule="evenodd" d="M19 19H5V5h7V3H5c-1.11 0-2 .9-2 2v14c0 1.1.89 2 2 2h14c1.1 0 2-.9 2-2v-7h-2v7zM14 3v2h3.59l-9.83 9.83 1.41 1.41L19 6.41V10h2V3h-7z"/></svg><div class="b" style="left:1289px;top:310px;width:520px;height:750px;border:1px solid #dedede;border-radius:5px;box-sizing:border-box;background:#fff"></div><div class="t" style="left:1306.0px;top:332.0px;font-size:16px;line-height:21px;color:#003b8e;-webkit-text-stroke:0.18px;letter-spacing:0.18px;">Details</div><svg class="i" style="left:1768px;top:331px" width="24" height="24" viewBox="0 0 24 24"><path fill="#000" fill-rule="evenodd" d="M7 14l5-5 5 5z"/></svg><div class="t" style="left:1306.0px;top:407.7px;font-size:12px;line-height:16px;color:#111;-webkit-text-stroke:0.24px;letter-spacing:0.94px;transform:scaleX(0.9300);">DESCRIPTION</div><div class="t" style="left:1306.0px;top:492.0px;font-size:12px;line-height:16px;color:#111;-webkit-text-stroke:0.24px;letter-spacing:1.20px;transform:scaleX(0.9300);">TYPE</div><div class="t" style="left:1306.0px;top:554.6px;font-size:12px;line-height:16px;color:#111;-webkit-text-stroke:0.24px;letter-spacing:0.83px;transform:scaleX(0.9300);">TRUST SCORE</div><div class="t" style="left:1306.0px;top:622.6px;font-size:12px;line-height:16px;color:#111;-webkit-text-stroke:0.24px;letter-spacing:1.16px;transform:scaleX(0.9300);">CLASSIFICATION</div><div class="t" style="left:1306.0px;top:695.9px;font-size:12px;line-height:16px;color:#111;-webkit-text-stroke:0.24px;letter-spacing:1.48px;transform:scaleX(0.9300);">DOMAIN</div><div class="t" style="left:1306.0px;top:769.0px;font-size:12px;line-height:16px;color:#111;-webkit-text-stroke:0.24px;letter-spacing:0.82px;transform:scaleX(0.9300);">VERIFIED FOR</div><div class="t" style="left:1306.0px;top:841.7px;font-size:12px;line-height:16px;color:#111;-webkit-text-stroke:0.24px;letter-spacing:0.88px;transform:scaleX(0.9300);">DO NOT USE FOR</div><div class="t" style="left:1306.0px;top:917.0px;font-size:12px;line-height:16px;color:#111;-webkit-text-stroke:0.24px;letter-spacing:0.87px;transform:scaleX(0.9300);">OWNER</div><div class="t" style="left:1306.0px;top:994.1px;font-size:12px;line-height:16px;color:#111;-webkit-text-stroke:0.24px;letter-spacing:1.00px;transform:scaleX(0.9300);">STEWARD</div><div class="t" style="left:1450.0px;top:375.9px;font-size:14px;line-height:18px;color:#0a0a0a;-webkit-text-stroke:0.09px;letter-spacing:0.10px;">Lorem ipsum dolor sit amet, consectetur adipiscing</div><div class="t" style="left:1450.0px;top:396.5px;font-size:14px;line-height:18px;color:#0a0a0a;-webkit-text-stroke:0.09px;letter-spacing:0.07px;">elit, sed do eiusmod tempor incididunt ut labore et</div><div class="t" style="left:1450.0px;top:417.0px;font-size:14px;line-height:18px;color:#0a0a0a;-webkit-text-stroke:0.09px;letter-spacing:0.03px;">dolore magna aliqua. Ut aliquam purus sit amet. Turpis</div><div class="t" style="left:1450.0px;top:437.5px;font-size:14px;line-height:18px;color:#0a0a0a;-webkit-text-stroke:0.09px;transform:scaleX(0.9799);">ma...</div><svg class="i" style="left:1449.8px;top:487.8px" width="24" height="24" viewBox="-12 -12 24 24"><g stroke="#29b5e8" stroke-width="2.7" stroke-linecap="round" stroke-linejoin="round" fill="none"><path transform="rotate(0)" d="M10.5 -2.8 L5.65 0 L10.5 2.8"/><path transform="rotate(60)" d="M10.5 -2.8 L5.65 0 L10.5 2.8"/><path transform="rotate(120)" d="M10.5 -2.8 L5.65 0 L10.5 2.8"/><path transform="rotate(180)" d="M10.5 -2.8 L5.65 0 L10.5 2.8"/><path transform="rotate(240)" d="M10.5 -2.8 L5.65 0 L10.5 2.8"/><path transform="rotate(300)" d="M10.5 -2.8 L5.65 0 L10.5 2.8"/><path d="M0 -2.1 L2.1 0 L0 2.1 L-2.1 0 Z" stroke-width="1.6"/></g></svg><div class="t" style="left:1490.0px;top:482.1px;font-size:14px;line-height:18px;color:#111;-webkit-text-stroke:0.09px;transform:scaleX(0.9336);">SNOWFLAKE TABLE</div><div class="t" style="left:1490.0px;top:502.8px;font-size:12px;line-height:16px;color:#8a8a8a;-webkit-text-stroke:0.09px;letter-spacing:0.12px;">demo2://adventureworks/humanresource…</div><svg class="i" style="left:1450.8px;top:551.7px" width="23" height="23" viewBox="0 0 24 24"><path fill="#00d46a" fill-rule="evenodd" d="M12 1L3 5v6c0 5.55 3.84 10.74 9 12 5.16-1.26 9-6.45 9-12V5l-9-4z"/><path d="M12 7.5L16 11.5H13.6V15.4H10.4V11.5H8Z" fill="#fff"/></svg><div class="t" style="left:1490.0px;top:545.1px;font-size:14px;line-height:18px;color:#111;-webkit-text-stroke:0.09px;letter-spacing:0.09px;">Highest</div><div class="t" style="left:1490.0px;top:564.8px;font-size:12px;line-height:16px;color:#8a8a8a;-webkit-text-stroke:0.09px;letter-spacing:0.09px;">Last calculated on Sep 11</div><div class="b" style="left:1449.7px;top:620px;width:139.0px;height:24px;background:#ef4349;border-radius:12px"></div><div class="t" style="left:1462.0px;top:623.1px;font-size:14px;line-height:18px;color:#fff;-webkit-text-stroke:0.36px;letter-spacing:-0.11px;">Highly Confidential</div><div class="b" style="left:1449.7px;top:693px;width:84.29999999999995px;height:24px;background:#03195f;border-radius:12px"></div><div class="t" style="left:1462.0px;top:696.1px;font-size:14px;line-height:18px;color:#fff;-webkit-text-stroke:0.36px;letter-spacing:-0.10px;">Customer</div><div class="b" style="left:1539.9px;top:693px;width:85.0px;height:24px;background:#03195f;border-radius:12px"></div><div class="t" style="left:1552.0px;top:696.1px;font-size:14px;line-height:18px;color:#fff;-webkit-text-stroke:0.36px;letter-spacing:-0.06px;">Marketing</div><div class="b" style="left:1449.7px;top:766px;width:122.0px;height:24px;background:#00d46a;border-radius:12px"></div><div class="t" style="left:1462.0px;top:769.1px;font-size:14px;line-height:18px;color:#111;-webkit-text-stroke:0.15px;transform:scaleX(0.9790);">Customer churn</div><div class="b" style="left:1577.9px;top:766px;width:141.0999999999999px;height:24px;background:#00d46a;border-radius:12px"></div><div class="t" style="left:1590.0px;top:769.1px;font-size:14px;line-height:18px;color:#111;-webkit-text-stroke:0.15px;transform:scaleX(0.9827);">Customer retention</div><div class="b" style="left:1449.7px;top:839px;width:158.20000000000005px;height:24px;background:#ef4349;border-radius:12px"></div><div class="t" style="left:1462.0px;top:842.1px;font-size:14px;line-height:18px;color:#fff;-webkit-text-stroke:0.36px;transform:scaleX(0.9841);">Marketing Campaigns</div><div class="b" style="left:1449.7px;top:914px;width:161.29999999999995px;height:24px;border:1px solid #003b8e;border-radius:12px;box-sizing:border-box;background:#fff"></div><div class="b av" style="left:1454.9px;top:917px;width:18px;height:18px;line-height:18px;font-size:9.5px;letter-spacing:-0.3px;text-indent:-0.3px;background:#003b8e">FL</div><div class="t" style="left:1483.0px;top:917.3px;font-size:14px;line-height:18px;color:#003b8e;-webkit-text-stroke:0.18px;letter-spacing:-0.03px;">Fedora Lantaph</div><div class="b" style="left:1449.7px;top:991px;width:160.29999999999995px;height:24px;border:1px solid #003b8e;border-radius:12px;box-sizing:border-box;background:#fff"></div><div class="b av" style="left:1454.9px;top:994px;width:18px;height:18px;line-height:18px;font-size:9.5px;letter-spacing:-0.3px;text-indent:-0.3px;background:#003b8e">HB</div><div class="t" style="left:1483.0px;top:994.3px;font-size:14px;line-height:18px;color:#003b8e;-webkit-text-stroke:0.18px;letter-spacing:0.15px;">Hoyt Batchellor</div></div></body></html>
